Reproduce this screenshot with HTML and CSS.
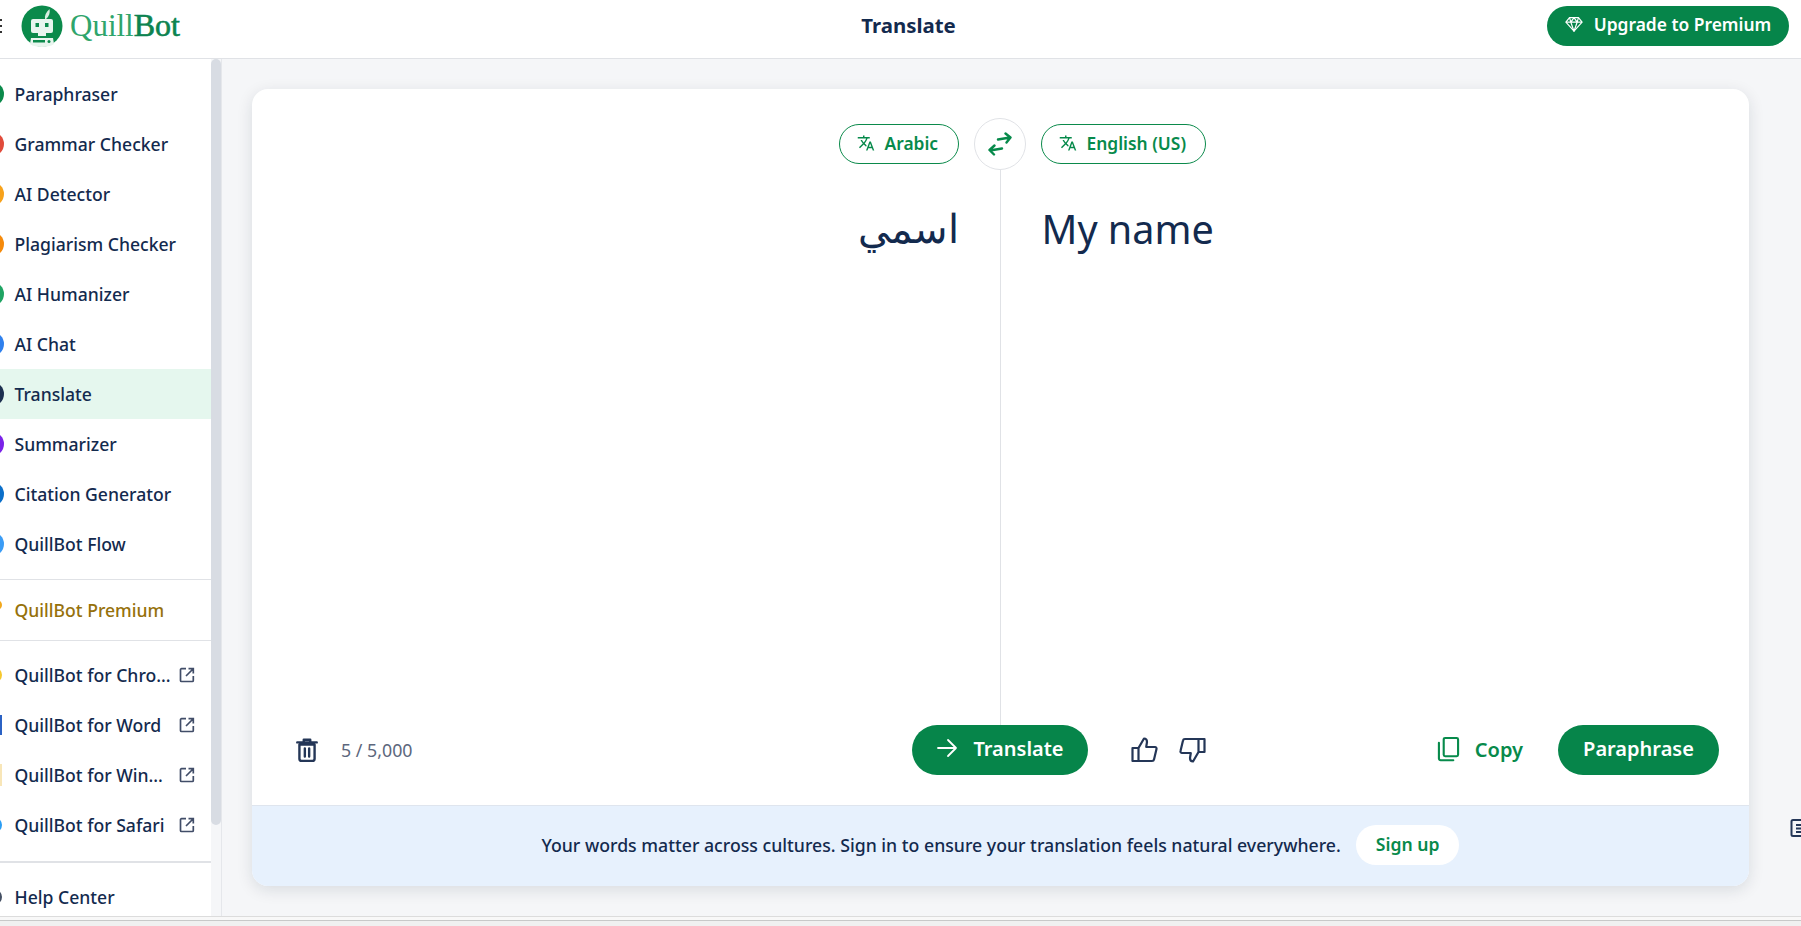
FILE: index.html
```html
<!DOCTYPE html>
<html lang="en">
  <head>
    <meta charset="UTF-8" />
    <meta name="viewport" content="width=device-width, initial-scale=1.0" />
    <title>Translate</title>
    <link rel="stylesheet" href="styles.css">
  </head>
  <body>
    <header class="topbar">
      <div class="topbar-left">
        <div class="menu-dots"><span></span><span></span><span></span></div>
        <svg class="logo-mark" viewBox="0 0 42 42" width="42" height="42">
          <circle cx="21" cy="21" r="20.5" fill="#0b8a4b" />
          <path d="M24 14c-.6-3 1-7 4.500-10 .8 3.500-.4 7.500-3.500 10z" fill="#d9efe2" />
          <rect x="10" y="14" width="22" height="14" rx="2" fill="#e8f5ee" />
          <rect x="14.500" y="18" width="3.500" height="4" fill="#0b8a4b" />
          <rect x="24" y="18" width="3.500" height="4" fill="#0b8a4b" />
          <rect x="17" y="28" width="8" height="3" fill="#e8f5ee" />
          <path d="M10 33h22l1 6c-3 2.200-7.500 3-12 3s-9-.8-12-3z" fill="#e8f5ee" />
          <rect x="12" y="35" width="12" height="2.500" fill="#0b8a4b" />
          <circle cx="28" cy="36.500" r="1.500" fill="#0b8a4b" />
        </svg>
        <div class="logo-text"><span class="logo-quill">Quill</span><span class="logo-bot">Bot</span></div>
      </div>
      <div class="topbar-title">Translate</div>
      <div class="topbar-right">
        <button class="btn btn-upgrade">
          <svg viewBox="0 0 20 20" width="18" height="18" fill="none" stroke="#fff" stroke-width="1.300" stroke-linejoin="round">
            <path d="M5 3h10l4 5-9 10L1 8z" />
            <path d="M1 8h18M6.500 8 10 18l3.500-10M5 3l1.500 5L10 3l3.500 5L15 3" />
          </svg>
          Upgrade to Premium
        </button>
      </div>
    </header>

    <div class="layout">
      <aside class="sidebar">
        <nav class="side-scroll">
          <a class="side-item"><i class="dot dot-green"></i><span class="side-label">Paraphraser</span></a>
          <a class="side-item"><i class="dot dot-red"></i><span class="side-label">Grammar Checker</span></a>
          <a class="side-item"><i class="dot dot-amber"></i><span class="side-label">AI Detector</span></a>
          <a class="side-item"><i class="dot dot-orange"></i><span class="side-label">Plagiarism Checker</span></a>
          <a class="side-item"><i class="dot dot-teal"></i><span class="side-label">AI Humanizer</span></a>
          <a class="side-item"><i class="dot dot-blue"></i><span class="side-label">AI Chat</span></a>
          <a class="side-item active"><i class="dot dot-navy"></i><span class="side-label">Translate</span></a>
          <a class="side-item"><i class="dot dot-purple"></i><span class="side-label">Summarizer</span></a>
          <a class="side-item"><i class="dot dot-royal"></i><span class="side-label">Citation Generator</span></a>
          <a class="side-item"><i class="dot dot-sky"></i><span class="side-label">QuillBot Flow</span></a>
          <div class="side-divider premium-top"></div>
          <a class="side-item premium"><i class="dot-gold"></i><span class="side-label">QuillBot Premium</span></a>
          <div class="side-divider apps-top"></div>
          <a class="side-item"><i class="dot-small dot-chrome"></i><span class="side-label">QuillBot for Chro...</span>
            <svg class="ext-icon" viewBox="0 0 16 16" width="16" height="16"><path d="M7 1.700H2.500a1 1 0 0 0-1 1v10.800a1 1 0 0 0 1 1h10.800a1 1 0 0 0 1-1V9M9.500 1.700h4.800v4.800M14 2 7 9" /></svg></a>
          <a class="side-item"><i class="dot-word"></i><span class="side-label">QuillBot for Word</span>
            <svg class="ext-icon" viewBox="0 0 16 16" width="16" height="16"><path d="M7 1.700H2.500a1 1 0 0 0-1 1v10.800a1 1 0 0 0 1 1h10.800a1 1 0 0 0 1-1V9M9.500 1.700h4.800v4.800M14 2 7 9" /></svg></a>
          <a class="side-item"><i class="dot-win"></i><span class="side-label">QuillBot for Win...</span>
            <svg class="ext-icon" viewBox="0 0 16 16" width="16" height="16"><path d="M7 1.700H2.500a1 1 0 0 0-1 1v10.800a1 1 0 0 0 1 1h10.800a1 1 0 0 0 1-1V9M9.500 1.700h4.800v4.800M14 2 7 9" /></svg></a>
          <a class="side-item"><i class="dot-small dot-safari"></i><span class="side-label">QuillBot for Safari</span>
            <svg class="ext-icon" viewBox="0 0 16 16" width="16" height="16"><path d="M7 1.700H2.500a1 1 0 0 0-1 1v10.800a1 1 0 0 0 1 1h10.800a1 1 0 0 0 1-1V9M9.500 1.700h4.800v4.800M14 2 7 9" /></svg></a>
          <div class="side-divider thick"></div>
          <a class="side-item help"><i class="dot-small dot-help"></i><span class="side-label">Help Center</span></a>
        </nav>
        <div class="side-track"><div class="side-thumb"></div></div>
      </aside>

      <main class="main">
        <section class="card">
          <div class="lang-row">
            <button class="lang-pill lang-left">
              <svg class="lang-icon" viewBox="0 0 24 24" width="18" height="18"><path d="m12.900 15.100-2.600-2.500v-.1c1.800-2 3-4.200 3.800-6.500H17V4h-7V2H8v2H1v2h11.200c-.7 1.900-1.700 3.800-3.200 5.400-.9-1-1.700-2.200-2.300-3.400h-2c.7 1.600 1.700 3.200 3 4.600l-5.100 5L4 19l5-5 3.100 3.100zM18.500 10h-2L12 22h2l1.100-3h4.800l1.100 3h2zm-2.600 7 1.600-4.300 1.600 4.300z" /></svg>
              Arabic
            </button>
            <button class="swap-btn">
              <svg viewBox="0 0 28 24" width="28" height="24" fill="none" stroke="#078a4b" stroke-width="2.400" stroke-linecap="round" stroke-linejoin="round">
                <path d="M12 7.500 24 5.500M19.500 1.500 24.500 5.500 20.500 10.500" />
                <path d="M16 16.500 4 18.500M8.500 13.500 3.500 18 8 22.500" />
              </svg>
            </button>
            <button class="lang-pill lang-right">
              <svg class="lang-icon" viewBox="0 0 24 24" width="18" height="18"><path d="m12.900 15.100-2.600-2.500v-.1c1.800-2 3-4.200 3.800-6.500H17V4h-7V2H8v2H1v2h11.200c-.7 1.900-1.700 3.800-3.200 5.400-.9-1-1.700-2.200-2.300-3.400h-2c.7 1.600 1.700 3.200 3 4.600l-5.100 5L4 19l5-5 3.100 3.100zM18.500 10h-2L12 22h2l1.100-3h4.800l1.100 3h2zm-2.600 7 1.600-4.300 1.600 4.300z" /></svg>
              English (US)
            </button>
          </div>

          <div class="panes">
            <div class="pane pane-source" dir="rtl" lang="ar">اسمي</div>
            <div class="pane pane-target">My name</div>
          </div>

          <div class="actions">
            <div class="actions-left">
              <svg class="icon-navy" viewBox="0 0 24 24" width="26" height="26"><path d="M5 7h14v13a2 2 0 0 1-2 2H7a2 2 0 0 1-2-2zM3 5h18M9 5V2.500h6V5M10 10.500V18M14 10.500V18" /></svg>
              <span class="char-count">5 / 5,000</span>
            </div>
            <button class="btn btn-translate">
              <svg viewBox="0 0 24 24" width="24" height="24" fill="none" stroke="#fff" stroke-width="1.800" stroke-linecap="round" stroke-linejoin="round"><path d="M3 12h18M13 4l8 8-8 8" /></svg>
              Translate
            </button>
            <div class="actions-right">
              <div class="thumbs">
                <svg class="icon-navy" viewBox="0 0 28 28" width="28" height="28"><path d="M8.500 12H2.500v13h6zM8.500 12 14 2.500c2 0 3 1.500 3 3.500l-.8 5H25c1 0 1.800 1 1.500 2l-2.500 10.500c-.2 1-1 1.500-2 1.500H8.500" /></svg>
                <svg class="icon-navy" viewBox="0 0 28 28" width="28" height="28"><path d="M19.500 16h6V3h-6zM19.500 16 14 25.500c-2 0-3-1.500-3-3.500l.8-5H3c-1 0-1.800-1-1.500-2L4 4.500C4.200 3.500 5 3 6 3h13.500" /></svg>
              </div>
              <button class="copy-btn">
                <svg viewBox="0 0 24 26" width="23" height="26" fill="none" stroke="#078a4b" stroke-width="2.200" stroke-linejoin="round" stroke-linecap="round"><path d="M7 3a1.500 1.500 0 0 1 1.500-1.500h12A1.500 1.500 0 0 1 22 3v16a1.500 1.500 0 0 1-1.500 1.500h-12A1.500 1.500 0 0 1 7 19z" /><path d="M2 6.500V23a1.800 1.800 0 0 0 1.800 1.800H17" /></svg>
                Copy
              </button>
              <button class="btn btn-paraphrase">Paraphrase</button>
            </div>
          </div>

          <div class="banner">
            <span>Your words matter across cultures. Sign in to ensure your translation feels natural everywhere.</span>
            <button class="signup-btn">Sign up</button>
          </div>
        </section>
        <svg class="notes-icon" viewBox="0 0 20 20" width="20" height="20"><path d="M3 2h16v16H3a1.500 1.500 0 0 1-1.500-1.500v-13A1.500 1.500 0 0 1 3 2zM6 7h12M6 10.500h12M6 14h8" /></svg>
      </main>
    </div>

    <div class="window-strip"></div>
  </body>
</html>
```

FILE: styles.css
```css
* {
  box-sizing: border-box;
}
body {
  font-family: "Noto Sans", "Open Sans", sans-serif;
  color: #132a4e;
  background-color: #fff;
  margin: 0;
  height: 100vh;
  overflow: hidden;
  display: flex;
  flex-direction: column;
}
button {
  font-family: inherit;
  border: none;
  background: none;
  padding: 0;
}

/* top bar */
.topbar {
  height: 59px;
  flex: none;
  display: flex;
  align-items: center;
  border-bottom: 1px solid #e0e2e6;
  background-color: #fff;
}
.topbar-left {
  width: 270px;
  display: flex;
  align-items: center;
  height: 100%;
}
.menu-dots {
  width: 21px;
  display: flex;
  flex-direction: column;
  gap: 4px;
  margin-bottom: 6px;
}
.menu-dots span {
  width: 2px;
  height: 2px;
  background-color: #333;
}
.logo-mark {
  margin-bottom: 6px;
}
.logo-text {
  font-family: "Liberation Serif", serif;
  margin-left: 7px;
  margin-bottom: 7px;
}
.logo-quill {
  font-size: 31px;
  color: #2fa56c;
}
.logo-bot {
  font-size: 32px;
  color: #0c8350;
  -webkit-text-stroke: 0.6px #0c8350;
}
.topbar-title {
  flex: 1;
  text-align: center;
  font-size: 20.400px;
  font-weight: 700;
  margin-bottom: 8px;
}
.topbar-right {
  width: 254px;
  height: 100%;
  padding-top: 6px;
}
.btn {
  background-color: #06854a;
  color: #fff;
  display: inline-flex;
  align-items: center;
  justify-content: center;
  font-weight: 600;
  padding-bottom: 4px;
  cursor: pointer;
}
.btn-upgrade {
  width: 242px;
  height: 40px;
  border-radius: 20px;
  font-size: 17.400px;
  gap: 11px;
}

/* sidebar */
.layout {
  flex: 1;
  display: flex;
  min-height: 0;
}
.sidebar {
  width: 222px;
  flex: none;
  display: flex;
  background-color: #fff;
  border-right: 1px solid #e5e7eb;
  overflow: hidden;
}
.side-scroll {
  width: 211px;
  flex: none;
  padding-top: 10px;
}
.side-item {
  height: 50px;
  display: flex;
  align-items: center;
  font-size: 17.600px;
  font-weight: 500;
  color: #132a4e;
}
.side-item.active {
  background-color: #e5f7ee;
}
.side-item.premium {
  height: 60px;
  color: #96710b;
}
.side-item.help {
  height: 68px;
}
.side-label {
  flex: 1;
  white-space: nowrap;
}
.dot {
  width: 24px;
  height: 24px;
  border-radius: 50%;
  margin-left: -20px;
  margin-right: 10.500px;
  flex: none;
}
.dot-green { background-color: #0b8a4b; }
.dot-red { background-color: #e14b3b; }
.dot-amber { background-color: #f7a21b; }
.dot-orange { background-color: #f58a0b; }
.dot-teal { background-color: #1fa463; }
.dot-blue { background-color: #2f80ed; }
.dot-navy { background-color: #1d3050; }
.dot-purple { background-color: #7a22e8; }
.dot-royal { background-color: #0b6fc9; }
.dot-sky { background-color: #3b9cf5; }
.dot-small {
  width: 16px;
  height: 16px;
  border-radius: 50%;
  margin-left: -14.500px;
  margin-right: 13px;
  flex: none;
}
.dot-gold {
  width: 10px;
  height: 10px;
  border-radius: 50%;
  background-color: #f2a81d;
  margin-left: -8px;
  margin-right: 12.500px;
  margin-bottom: 10px;
  flex: none;
}
.dot-chrome { background-color: #f6c82e; }
.dot-word {
  width: 2px;
  height: 20px;
  margin-right: 12.500px;
  background-color: #2b62c4;
  flex: none;
}
.dot-win {
  width: 1.500px;
  height: 22px;
  margin-right: 13px;
  background-color: #f8e6b8;
  flex: none;
}
.dot-safari { background-color: #2a9df4; }
.dot-help {
  background-color: #fff;
  border: 2px solid #444f63;
}
.ext-icon {
  margin-right: 16px;
  fill: none;
  stroke: #414d68;
  stroke-width: 1.700;
  flex: none;
}
.side-divider {
  height: 1px;
  background-color: #e0e2e6;
}
.premium-top {
  margin-top: 10px;
}
.apps-top {
  margin-bottom: 9px;
}
.side-divider.thick {
  height: 2px;
  margin-top: 11px;
}
.side-track {
  width: 10px;
  flex: none;
  background-color: #f5f6f8;
}
.side-thumb {
  height: 766px;
  background-color: #d8dce3;
  border-radius: 5px;
}

/* main card */
.main {
  flex: 1;
  min-width: 0;
  background-color: #f5f6f8;
  padding: 30px 52px 30px 30px;
  position: relative;
}
.card {
  height: 100%;
  background-color: #fff;
  border-radius: 16px;
  box-shadow: 0 4px 16px rgba(20, 30, 50, 0.12);
  overflow: hidden;
  display: flex;
  flex-direction: column;
}
.lang-row {
  display: grid;
  grid-template-columns: 1fr 52px 1fr;
  column-gap: 15px;
  align-items: center;
  padding: 29px 2px 0 0;
  flex: none;
}
.lang-pill {
  height: 40px;
  border: 1px solid #0b8a4b;
  border-radius: 20px;
  color: #078a4b;
  font-size: 17.400px;
  font-weight: 600;
  display: flex;
  align-items: center;
  gap: 10px;
  padding: 0 17px 2px;
}
.lang-left {
  justify-self: end;
  width: 120px;
}
.lang-right {
  justify-self: start;
  width: 165px;
}
.lang-icon {
  fill: #078a4b;
  flex: none;
}
.swap-btn {
  width: 52px;
  height: 52px;
  border: 1px solid #e0e2e6;
  border-radius: 50%;
  display: flex;
  align-items: center;
  justify-content: center;
}
.panes {
  flex: 1;
  min-height: 0;
  display: grid;
  grid-template-columns: 1fr 1fr;
}
.pane {
  font-size: 39.600px;
  color: #132a4e;
}
.pane-source {
  padding-right: 41px;
  padding-top: 31px;
  border-right: 1px solid #e0e2e6;
}
.pane-target {
  padding-left: 41px;
  padding-top: 32px;
}
.actions {
  flex: none;
  height: 80px;
  display: grid;
  grid-template-columns: 1fr 176px 1fr;
  padding: 0 30px 30px;
}
.actions-left {
  display: flex;
  align-items: center;
  gap: 21px;
  padding-left: 12px;
}
.icon-navy {
  fill: none;
  stroke: #243657;
  stroke-width: 2.200;
  stroke-linejoin: round;
  stroke-linecap: round;
}
.char-count {
  font-size: 17.800px;
  color: #5c677d;
}
.btn-translate {
  height: 50px;
  border-radius: 25px;
  font-size: 20px;
  gap: 14px;
  margin-left: -1px;
  margin-right: 1px;
}
.actions-right {
  display: flex;
  align-items: center;
}
.thumbs {
  display: flex;
  gap: 21px;
  margin-left: 41px;
}
.copy-btn {
  margin-left: auto;
  margin-right: 35px;
  display: flex;
  align-items: center;
  gap: 15px;
  color: #078a4b;
  font-size: 20px;
  font-weight: 600;
  padding-bottom: 2px;
}
.btn-paraphrase {
  width: 161px;
  height: 50px;
  border-radius: 25px;
  font-size: 20px;
}
.banner {
  flex: none;
  height: 81px;
  background-color: #e7f1fd;
  border-top: 1px solid #dfe5ee;
  display: flex;
  align-items: center;
  justify-content: center;
  gap: 15px;
  font-size: 17.700px;
  font-weight: 500;
  padding-bottom: 2px;
}
.signup-btn {
  height: 40px;
  padding: 0 20px 2px;
  border-radius: 20px;
  background-color: #fff;
  color: #078a4b;
  font-size: 17.600px;
  font-weight: 600;
}
.notes-icon {
  position: absolute;
  left: 1568px;
  top: 759px;
  fill: none;
  stroke: #243657;
  stroke-width: 2;
}

/* browser edge at the bottom */
.window-strip {
  flex: none;
  height: 10px;
  background-color: #f0f0f0;
  border-top: 1px solid #dcdcdc;
  box-shadow: inset 0 3px 0 #f8f8f8, inset 0 4px 0 #c8c8c8;
}
```
